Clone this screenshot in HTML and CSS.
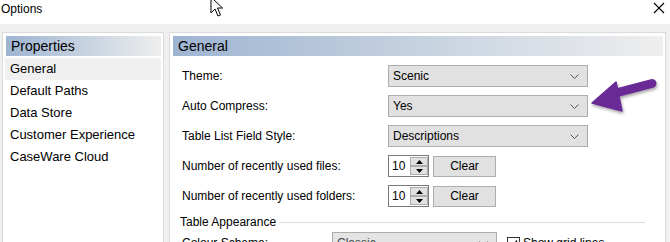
FILE: index.html
```html
<!DOCTYPE html>
<html>
<head>
<meta charset="utf-8">
<link rel="stylesheet" href="styles.css">
</head>
<body>
<div class="titlebar">
  <span class="title">Options</span>
  <svg class="close" width="12" height="12" viewBox="0 0 12 12"><path d="M1 1 L11 11 M11 1 L1 11" stroke="#000" stroke-width="1.1" fill="none"/></svg>
</div>
<div class="main">
  <aside class="panel side">
    <div class="hdr">Properties</div>
    <ul class="list">
      <li class="sel">General</li>
      <li>Default Paths</li>
      <li>Data Store</li>
      <li>Customer Experience</li>
      <li>CaseWare Cloud</li>
    </ul>
  </aside>
  <section class="panel content">
    <div class="hdr">General</div>
    <div class="form">
      <div class="row"><span class="lbl">Theme:</span><div class="combo"><span>Scenic</span><svg class="chev" width="9" height="5" viewBox="0 0 9 5"><path d="M0.5 0.5 L4.5 4.5 L8.5 0.5" stroke="#555" fill="none"/></svg></div></div>
      <div class="row"><span class="lbl">Auto Compress:</span><div class="combo"><span>Yes</span><svg class="chev" width="9" height="5" viewBox="0 0 9 5"><path d="M0.5 0.5 L4.5 4.5 L8.5 0.5" stroke="#555" fill="none"/></svg></div></div>
      <div class="row"><span class="lbl">Table List Field Style:</span><div class="combo"><span>Descriptions</span><svg class="chev" width="9" height="5" viewBox="0 0 9 5"><path d="M0.5 0.5 L4.5 4.5 L8.5 0.5" stroke="#555" fill="none"/></svg></div></div>
      <div class="row"><span class="lbl">Number of recently used files:</span>
        <div class="spin"><span class="val">10</span><div class="btns"><span class="sb"><svg width="7" height="4" viewBox="0 0 7 4"><path d="M0 4 L3.5 0 L7 4Z" fill="#000"/></svg></span><span class="sb"><svg width="7" height="4" viewBox="0 0 7 4"><path d="M0 0 L3.5 4 L7 0Z" fill="#000"/></svg></span></div></div>
        <button class="btn">Clear</button>
      </div>
      <div class="row"><span class="lbl">Number of recently used folders:</span>
        <div class="spin"><span class="val">10</span><div class="btns"><span class="sb"><svg width="7" height="4" viewBox="0 0 7 4"><path d="M0 4 L3.5 0 L7 4Z" fill="#000"/></svg></span><span class="sb"><svg width="7" height="4" viewBox="0 0 7 4"><path d="M0 0 L3.5 4 L7 0Z" fill="#000"/></svg></span></div></div>
        <button class="btn">Clear</button>
      </div>
      <div class="group"><span class="glbl">Table Appearance</span><span class="gline"></span></div>
      <div class="row row2"><span class="lbl lbl2">Colour Scheme:</span><div class="combo combo2"><span>Classic</span><svg class="chev" width="9" height="5" viewBox="0 0 9 5"><path d="M0.5 0.5 L4.5 4.5 L8.5 0.5" stroke="#555" fill="none"/></svg></div>
        <span class="chk"><svg width="11" height="11" viewBox="0 0 11 11"><path d="M2 5.5 L4.5 8 L9 2.5" stroke="#000" stroke-width="1.2" fill="none"/></svg></span><span class="chklbl">Show grid lines</span>
      </div>
    </div>
  </section>
</div>
<svg class="cursor" width="14" height="22" viewBox="0 0 14 22"><path d="M1 1 L1 17 L5 13 L8 20 L10.5 19 L7.5 12 L12.5 12 Z" fill="#fff" stroke="#000" stroke-width="1" stroke-linejoin="round"/></svg>
<svg class="pointer" width="80" height="50" viewBox="0 0 80 50">
  <defs><filter id="sh" x="-20%" y="-20%" width="140%" height="160%"><feDropShadow dx="1" dy="2" stdDeviation="1.5" flood-color="#000" flood-opacity="0.35"/></filter></defs>
  <g filter="url(#sh)" fill="#6b2a96">
    <path d="M20 19 L64 7.5" stroke="#6b2a96" stroke-width="9" stroke-linecap="round"/>
    <path d="M4 27 L28 6 L34 35 Z" stroke="#6b2a96" stroke-width="1.5" stroke-linejoin="round"/>
  </g>
</svg>
</body>
</html>
```

FILE: styles.css
```css
html, body {
  margin: 0;
  padding: 0;
}
body {
  width: 670px;
  height: 242px;
  overflow: hidden;
  background: #f0f0f0;
  font-family: "Liberation Sans", Arial, sans-serif;
  font-size: 12px;
  color: #000;
  position: relative;
}
.titlebar {
  height: 24px;
  background: #fff;
  display: flex;
  align-items: flex-start;
  justify-content: space-between;
}
.title {
  margin: 2px 0 0 1px;
  font-size: 12px;
  line-height: 14px;
}
.close {
  margin: 2px 5px 0 0;
}
.main {
  display: flex;
  padding: 8px 0 0 2px;
  gap: 5px;
}
.panel {
  background: #fff;
  border: 1px solid #dadada;
  height: 300px;
  box-sizing: border-box;
  padding: 3px;
}
.side {
  width: 162px;
  padding-right: 2px;
}
.content {
  width: 497px;
  padding-right: 2px;
}
.hdr {
  height: 20px;
  line-height: 20px;
  font-size: 14px;
  padding-left: 5px;
  background: linear-gradient(to right, #9eb5d2, #eeeeee);
  color: #000;
}
.list {
  list-style: none;
  margin: 2px 0 0 -1px;
  padding: 0;
}
.list li {
  height: 22px;
  line-height: 22px;
  font-size: 13px;
  padding-left: 5px;
}
.list li.sel {
  background: #f0f0f0;
}
.form {
  padding: 9px 0 0 9px;
}
.row {
  display: flex;
  align-items: center;
  height: 22px;
  margin-bottom: 8px;
}
.lbl {
  width: 206px;
  flex: none;
}
.combo {
  width: 200px;
  height: 22px;
  box-sizing: border-box;
  background: #e1e1e1;
  border: 1px solid #adadad;
  display: flex;
  align-items: center;
  justify-content: space-between;
  padding: 0 8px 0 4px;
  font-size: 12px;
}
.chev {
  display: block;
}
.spin {
  display: flex;
  width: 41px;
  height: 22px;
  box-sizing: border-box;
  border: 1px solid #7a7a7a;
  background: #fff;
}
.val {
  width: 22px;
  line-height: 20px;
  padding-left: 3px;
  box-sizing: border-box;
}
.btns {
  display: flex;
  flex-direction: column;
  justify-content: space-between;
  padding: 1px 0;
}
.sb {
  width: 16px;
  height: 8px;
  background: #e1e1e1;
  border: 1px solid #adadad;
  display: flex;
  align-items: center;
  justify-content: center;
}
.sb svg {
  display: block;
}
.btn {
  margin-left: 4px;
  width: 63px;
  height: 21px;
  box-sizing: border-box;
  background: #e1e1e1;
  border: 1px solid #adadad;
  font-family: "Liberation Sans", Arial, sans-serif;
  font-size: 12px;
  padding: 0;
  color: #000;
}
.group {
  display: flex;
  align-items: center;
  margin: 0 18px 0 -2px;
  height: 14px;
}
.glbl {
  line-height: 14px;
  margin-right: 3px;
}
.gline {
  flex: 1;
  border-top: 1px solid #dcdcdc;
  margin-top: 1px;
}
.row2 {
  margin-top: 3px;
}
.lbl2 {
  width: 150px;
}
.combo2 {
  width: 165px;
  background: #e4e4e4;
  color: #444;
}
.chk {
  margin-left: 10px;
  width: 13px;
  height: 13px;
  box-sizing: border-box;
  border: 1px solid #333;
  background: #fff;
  display: flex;
  align-items: center;
  justify-content: center;
}
.chk svg {
  display: block;
}
.chklbl {
  margin-left: 3px;
  line-height: 14px;
}
.cursor {
  position: absolute;
  left: 210px;
  top: -4px;
}
.pointer {
  position: absolute;
  left: 588px;
  top: 76px;
}
```
